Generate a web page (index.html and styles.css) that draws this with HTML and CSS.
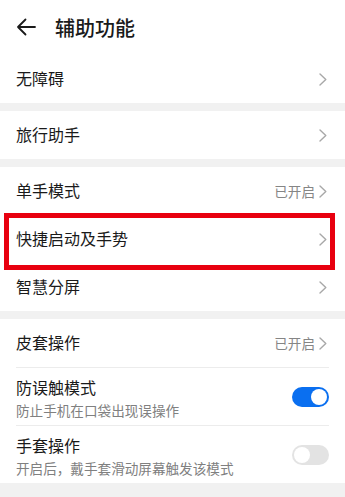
FILE: index.html
```html
<!DOCTYPE html>
<html lang="zh">
<head>
<meta charset="utf-8">
<link rel="stylesheet" href="styles.css">
</head>
<body>
<div class="header">
  <svg class="back" width="20" height="18" viewBox="0 0 20 18"><path d="M19 9H2M9.5 1.5L2 9l7.5 7.5" fill="none" stroke="#1a1a1a" stroke-width="1.8" stroke-linecap="round" stroke-linejoin="round"/></svg>
  <span class="title">辅助功能</span>
</div>

<div class="section">
  <div class="row"><span class="label">无障碍</span><span class="right"><svg class="chev" width="8" height="13" viewBox="0 0 8 13"><path d="M1 1l5.8 5.5L1 12" fill="none" stroke="#a8a8a8" stroke-width="1.4" stroke-linecap="round" stroke-linejoin="round"/></svg></span></div>
</div>
<div class="gap"></div>
<div class="section">
  <div class="row"><span class="label">旅行助手</span><span class="right"><svg class="chev" width="8" height="13" viewBox="0 0 8 13"><path d="M1 1l5.8 5.5L1 12" fill="none" stroke="#a8a8a8" stroke-width="1.4" stroke-linecap="round" stroke-linejoin="round"/></svg></span></div>
</div>
<div class="gap"></div>
<div class="section">
  <div class="row"><span class="label">单手模式</span><span class="right"><span class="status">已开启</span><svg class="chev" width="8" height="13" viewBox="0 0 8 13"><path d="M1 1l5.8 5.5L1 12" fill="none" stroke="#a8a8a8" stroke-width="1.4" stroke-linecap="round" stroke-linejoin="round"/></svg></span></div>
  <div class="row"><span class="label">快捷启动及手势</span><span class="right"><svg class="chev" width="8" height="13" viewBox="0 0 8 13"><path d="M1 1l5.8 5.5L1 12" fill="none" stroke="#a8a8a8" stroke-width="1.4" stroke-linecap="round" stroke-linejoin="round"/></svg></span><span class="mark"></span></div>
  <div class="row"><span class="label">智慧分屏</span><span class="right"><svg class="chev" width="8" height="13" viewBox="0 0 8 13"><path d="M1 1l5.8 5.5L1 12" fill="none" stroke="#a8a8a8" stroke-width="1.4" stroke-linecap="round" stroke-linejoin="round"/></svg></span></div>
</div>
<div class="gap"></div>
<div class="section">
  <div class="row"><span class="label">皮套操作</span><span class="right"><span class="status">已开启</span><svg class="chev" width="8" height="13" viewBox="0 0 8 13"><path d="M1 1l5.8 5.5L1 12" fill="none" stroke="#a8a8a8" stroke-width="1.4" stroke-linecap="round" stroke-linejoin="round"/></svg></span></div>
  <div class="divider"></div>
  <div class="row tall"><div class="texts"><span class="label">防误触模式</span><span class="sub">防止手机在口袋出现误操作</span></div><span class="toggle on"><span class="knob"></span></span></div>
  <div class="divider"></div>
  <div class="row tall"><div class="texts"><span class="label">手套操作</span><span class="sub">开启后，戴手套滑动屏幕触发该模式</span></div><span class="toggle"><span class="knob"></span></span></div>
</div>
<div class="gap last"></div>
</body>
</html>
```

FILE: styles.css
```css
* { box-sizing: border-box; }
html, body { margin: 0; padding: 0; }
body {
  width: 345px;
  height: 497px;
  overflow: hidden;
  background: #fff;
  font-family: "Noto Sans CJK SC", "Noto Sans", sans-serif;
  color: #1a1a1a;
}
.header {
  height: 55px;
  display: flex;
  align-items: center;
  padding-left: 16px;
}
.back { margin-right: 19px; margin-top: -1px; }
.title { font-size: 20px; font-weight: 500; line-height: 1; }
.gap { height: 8px; background: #f1f1f1; }
.gap.last { height: 20px; }
.section { background: #fff; }
.row {
  position: relative;
  height: 48px;
  display: flex;
  align-items: center;
  justify-content: space-between;
  padding: 0 16px;
}
.section:first-of-type .row { height: 47px; }
.label { font-size: 16px; line-height: 1.2; }
.right { display: flex; align-items: center; }
.status { font-size: 13.6px; color: #858585; margin-right: 4px; }
.chev { display: block; margin-right: 2px; }
.divider { height: 1px; background: #ececec; margin: 0 16px; }
.row.tall { height: 57px; }
.texts { display: flex; flex-direction: column; }
.texts .label { line-height: 20px; margin-top: 2px; }
.sub { font-size: 13.6px; color: #808080; line-height: 18px; margin-top: 4px; }
.toggle {
  width: 37px;
  height: 20px;
  border-radius: 10px;
  background: #e3e3e3;
  position: relative;
  flex-shrink: 0;
}
.toggle .knob {
  position: absolute;
  top: 2px;
  left: 2px;
  width: 16px;
  height: 16px;
  border-radius: 50%;
  background: #fff;
}
.toggle.on { background: #0a6ff0; }
.toggle.on .knob { left: 19px; }
.mark {
  position: absolute;
  left: 4px;
  right: 10px;
  top: -2px;
  height: 57px;
  border: 5px solid #e8000f;
  pointer-events: none;
}
```
